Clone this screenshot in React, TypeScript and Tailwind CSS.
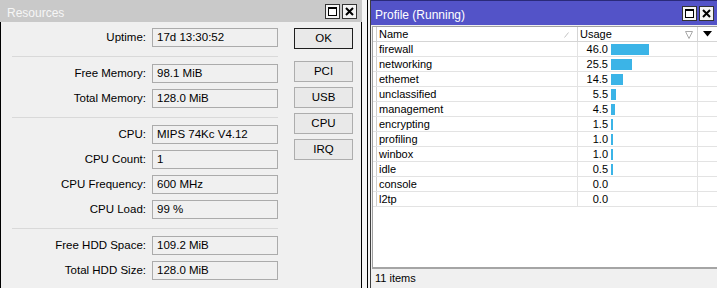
import React from "react";

type Row = [string, string];

const GROUPS: Row[][] = [
  [["Uptime", "17d 13:30:52"]],
  [
    ["Free Memory", "98.1 MiB"],
    ["Total Memory", "128.0 MiB"],
  ],
  [
    ["CPU", "MIPS 74Kc V4.12"],
    ["CPU Count", "1"],
    ["CPU Frequency", "600 MHz"],
    ["CPU Load", "99 %"],
  ],
  [
    ["Free HDD Space", "109.2 MiB"],
    ["Total HDD Size", "128.0 MiB"],
  ],
];

const BUTTONS = ["PCI", "USB", "CPU", "IRQ"];

const PROFILE: { name: string; usage: number }[] = [
  { name: "firewall", usage: 46.0 },
  { name: "networking", usage: 25.5 },
  { name: "ethemet", usage: 14.5 },
  { name: "unclassified", usage: 5.5 },
  { name: "management", usage: 4.5 },
  { name: "encrypting", usage: 1.5 },
  { name: "profiling", usage: 1.0 },
  { name: "winbox", usage: 1.0 },
  { name: "idle", usage: 0.5 },
  { name: "console", usage: 0.0 },
  { name: "l2tp", usage: 0.0 },
];

function MaxIcon() {
  return (
    <svg width="15" height="15" viewBox="0 0 15 15">
      <rect x="0.5" y="0.5" width="14" height="14" fill="#f4f4f4" stroke="#333" />
      <rect x="3.5" y="3.5" width="8" height="8" fill="#fff" stroke="#000" />
      <line x1="3" y1="4.5" x2="12" y2="4.5" stroke="#000" />
    </svg>
  );
}

function CloseIcon() {
  return (
    <svg width="15" height="15" viewBox="0 0 15 15">
      <rect x="0.5" y="0.5" width="14" height="14" fill="#f4f4f4" stroke="#333" />
      <path d="M4 4 L11 11 M11 4 L4 11" stroke="#000" strokeWidth="2" />
    </svg>
  );
}

function TitleButtons() {
  return (
    <div className="flex items-center gap-[2px]">
      <MaxIcon />
      <CloseIcon />
    </div>
  );
}

function Resources() {
  return (
    <div className="w-[362px] h-full flex flex-col shrink-0">
      <div className="h-[22px] shrink-0 bg-[#c9c9c9] flex items-center justify-between pl-[7px] pr-[5px] pt-px">
        <span className="text-[12px] text-[#f6f6f6] pt-[2px]">Resources</span>
        <TitleButtons />
      </div>
      <div className="flex-1 min-h-0 overflow-hidden flex border-x border-black bg-[#f0f0f0] pt-[6px] pl-[11px]">
        <div className="w-[266px] flex flex-col">
          {GROUPS.map((g, gi) => (
            <div key={gi} className="flex flex-col shrink-0">
              <div className="flex flex-col gap-[6px]">
                {g.map(([label, value]) => (
                  <div key={label} className="flex items-center gap-[6px]">
                    <span className="w-[134px] text-right text-[11.5px] text-black">{label}:</span>
                    <div className="w-[126px] h-[19px] border border-[#ababab] bg-[#f0f0f0] flex items-center pl-[4px] text-[11.5px] text-black">
                      {value}
                    </div>
                  </div>
                ))}
              </div>
              <div className="mt-[9px] mb-[7px] h-px bg-[#d9d9d9]" />
            </div>
          ))}
        </div>
        <div className="ml-[16px] w-[59px] flex flex-col text-[11.5px]">
          <div className="h-[21px] border border-[#1e1e1e] bg-[#e9e9e9] flex items-center justify-center">OK</div>
          <div className="mt-[12px] flex flex-col gap-[5px]">
            {BUTTONS.map((b) => (
              <div
                key={b}
                className="h-[21px] border border-[#adadad] bg-[#e9e9e9] flex items-center justify-center"
              >
                {b}
              </div>
            ))}
          </div>
        </div>
      </div>
    </div>
  );
}

function Profile() {
  return (
    <div className="w-[350px] h-full flex border-l border-black bg-[#f4f4f4] pl-[2px] shrink-0">
      <div className="flex-1 min-w-0 flex flex-col border-l border-[#404040]">
        <div className="h-[25px] shrink-0 bg-[#5353c8] border-t border-[#2a2a7a] flex items-center justify-between pl-[4px] pr-[3px] pt-px">
          <span className="text-[12px] text-white pt-[2px]">Profile (Running)</span>
          <TitleButtons />
        </div>
        <div className="flex-1 min-h-0 flex flex-col bg-[#f0f0f0] pl-px pt-px">
          <div className="flex-1 min-h-0 bg-white border-l border-t border-[#a0a0a0] border-b-2 border-b-[#a5a5a5] overflow-hidden">
            <div className="h-[15px] flex border-b border-[#d5d5d5]">
              <div className="w-[4px] border-r border-[#cfcfcf]" />
              <div className="w-[201px] border-r border-[#d5d5d5] flex items-center justify-between pl-[2px] pr-[8px] pt-px">
                <span>Name</span>
                <svg width="5" height="6" viewBox="0 0 5 6">
                  <path d="M0.5 5.5 L4.5 0.5" stroke="#c4c4c4" />
                </svg>
              </div>
              <div className="w-[120px] border-r border-[#d5d5d5] flex items-center justify-between pl-[2px] pr-[4px] pt-px">
                <span>Usage</span>
                <svg width="8" height="8" viewBox="0 0 8 8">
                  <path d="M0.5 0.5 L7.5 0.5 L4 7.5 Z" fill="none" stroke="#a8a8a8" />
                </svg>
              </div>
              <div className="flex-1 flex items-center pl-[5px]">
                <svg width="9" height="6" viewBox="0 0 9 6">
                  <path d="M0 0 L9 0 L4.5 5.5 Z" fill="#000" />
                </svg>
              </div>
            </div>
            {PROFILE.map((r) => {
              const w = r.usage > 0 ? Math.max(2, Math.round(r.usage * 0.83)) : 0;
              return (
                <div key={r.name} className="h-[15px] flex border-b border-[#e3e3e3]">
                  <div className="w-[4px] border-r border-[#cfcfcf]" />
                  <div className="w-[201px] border-r border-[#e3e3e3] flex items-center pl-[2px] pt-px">{r.name}</div>
                  <div className="w-[120px] border-r border-[#e3e3e3] flex items-center">
                    <span className="w-[30px] text-right pt-px">{r.usage.toFixed(1)}</span>
                    {w > 0 && <div className="ml-[3px] h-[11px] bg-[#3bb4e7]" style={{ width: w }} />}
                  </div>
                  <div className="flex-1" />
                </div>
              );
            })}
          </div>
          <div className="h-[19px] shrink-0 flex items-center pl-[3px]">11 items</div>
        </div>
      </div>
    </div>
  );
}

export default function App() {
  return (
    <div
      className="w-[717px] h-[288px] overflow-hidden flex bg-[#f0f0f0] text-[11px] text-black leading-none"
      style={{ fontFamily: '"Liberation Sans", Arial, sans-serif' }}
    >
      <Resources />
      <div className="w-[5px] shrink-0 bg-[#f5f5f5]" />
      <Profile />
    </div>
  );
}
